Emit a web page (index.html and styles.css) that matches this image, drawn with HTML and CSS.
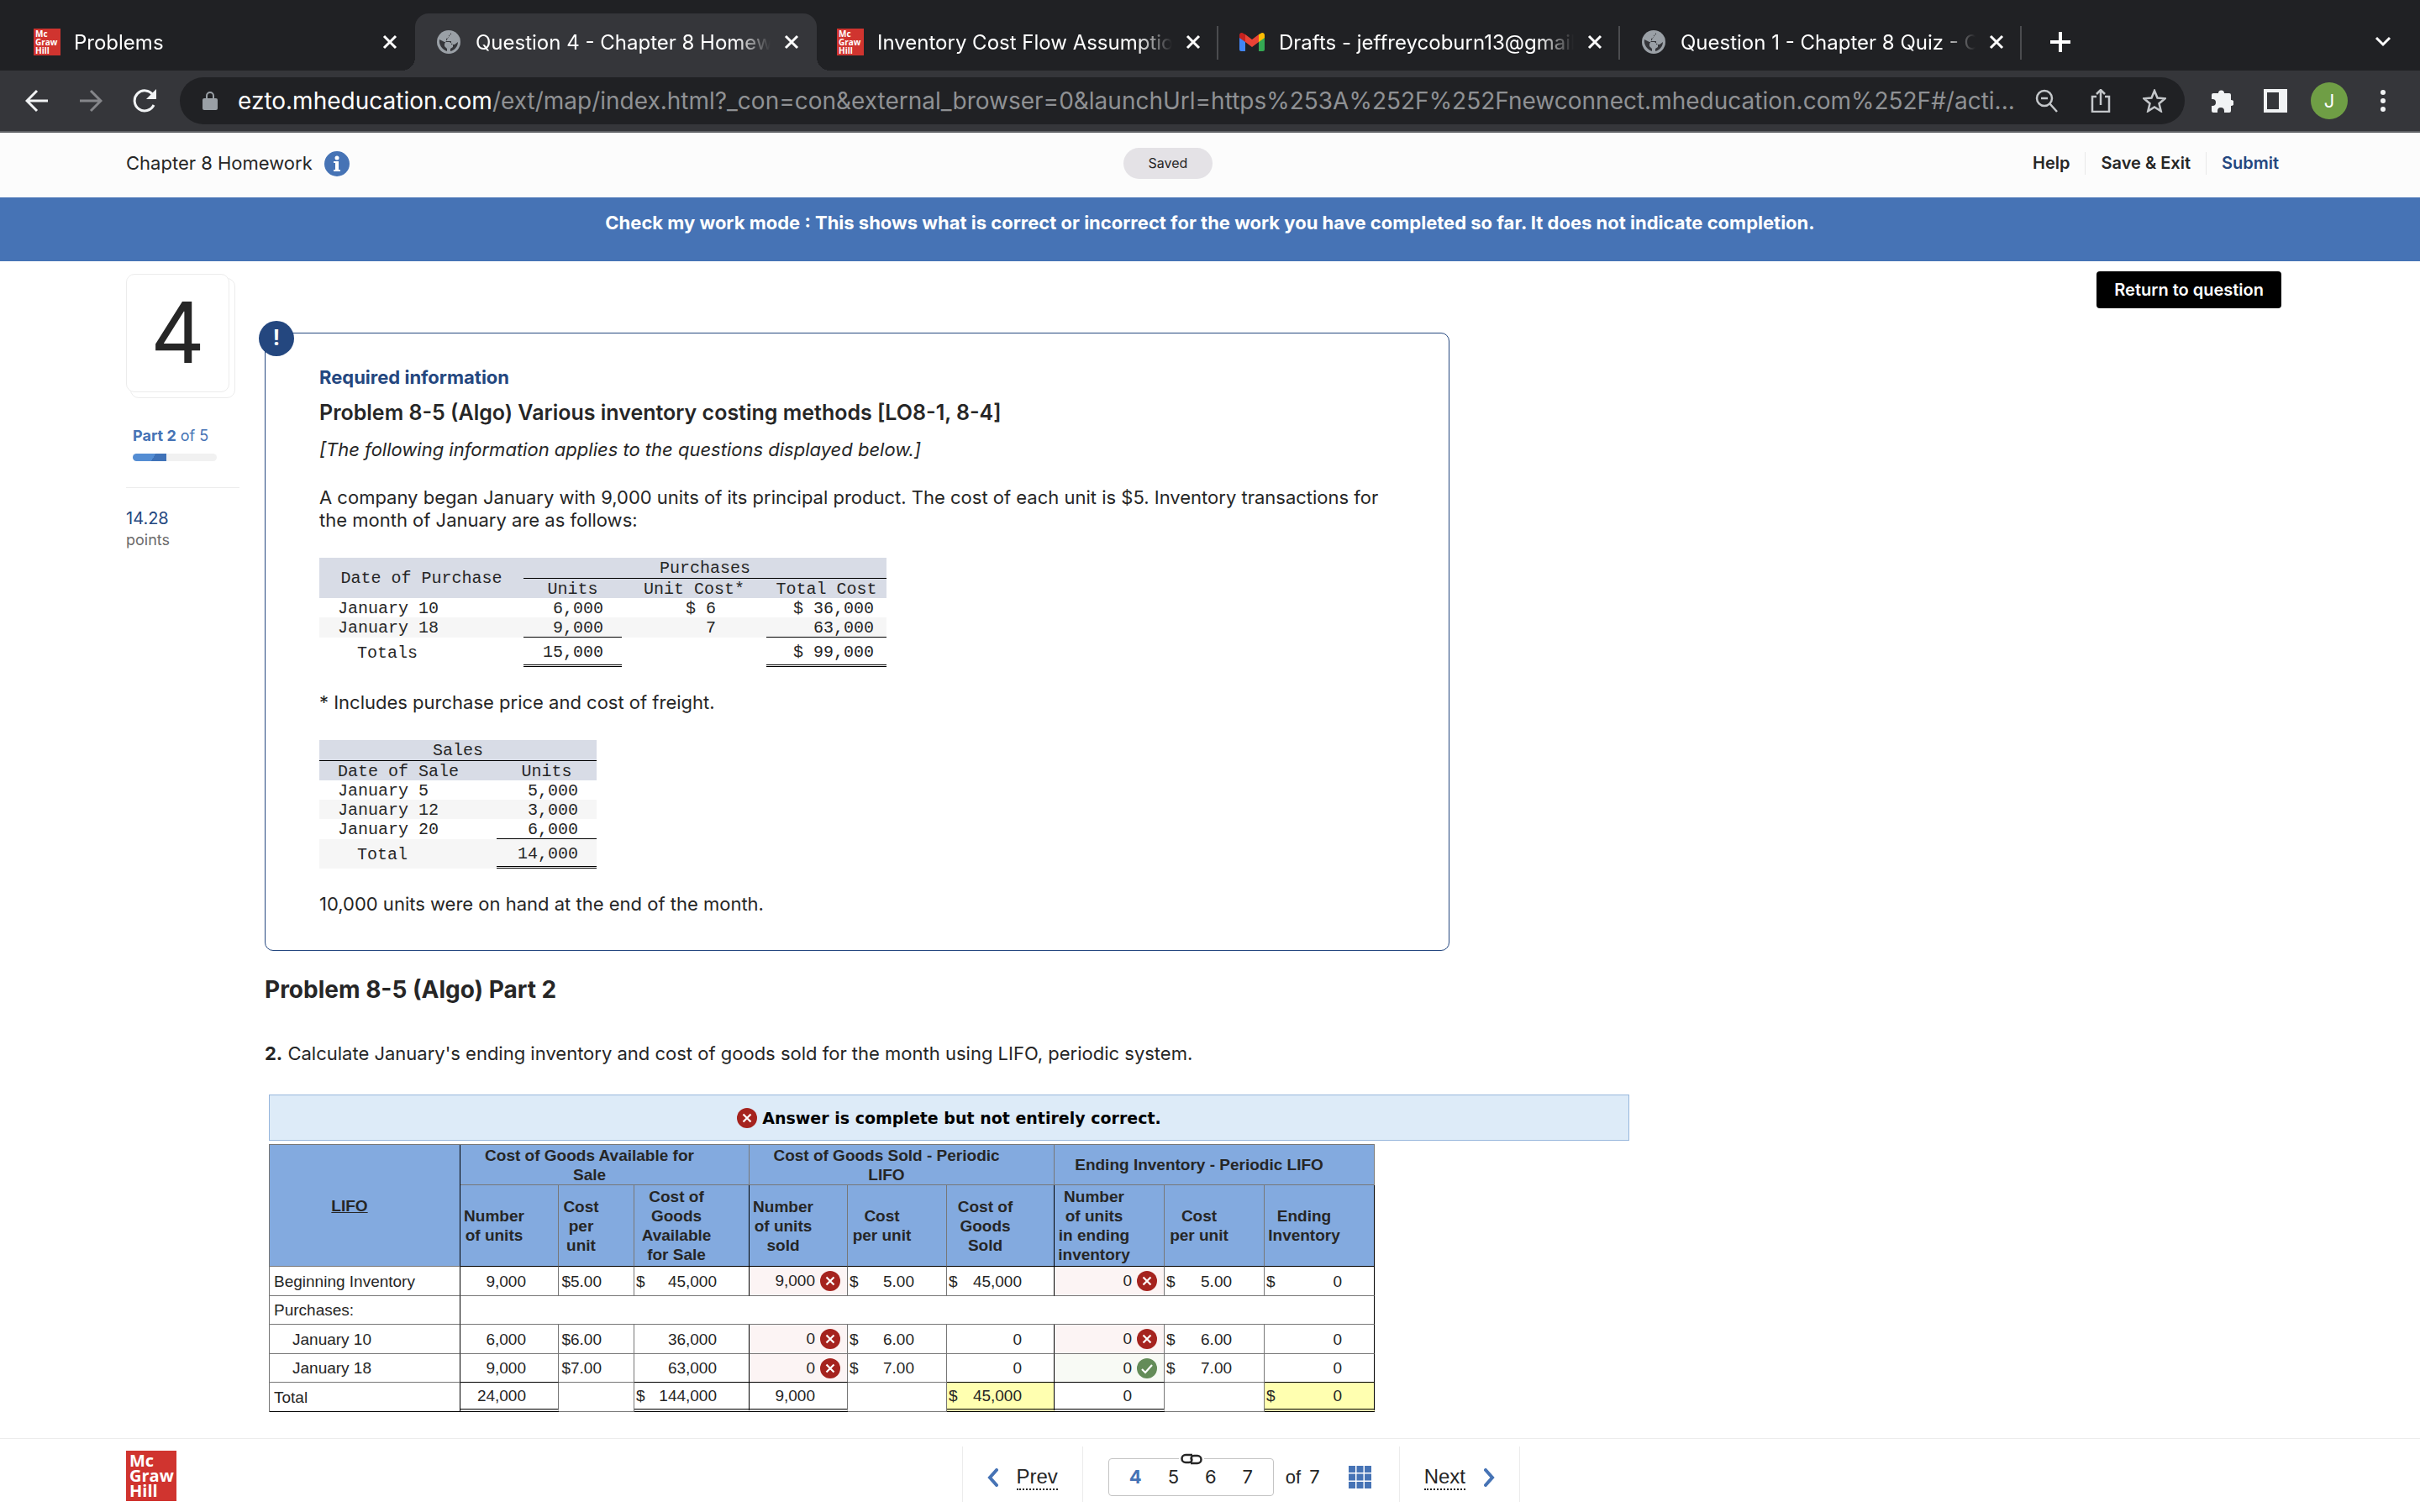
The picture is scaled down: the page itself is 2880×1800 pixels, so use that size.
FILE: index.html
```html
<!DOCTYPE html>
<html lang="en">
<head>
  <meta charset="UTF-8">
  <meta name="viewport" content="width=device-width, initial-scale=1.0">
  <title>Question 4 - Chapter 8 Homework</title>
  <link rel="stylesheet" href="styles.css">
</head>
<body>
  <svg class="sprite" aria-hidden="true">
    <symbol id="close" viewBox="0 0 18 18"><path d="M2 2l14 14M16 2L2 16" fill="none" stroke="currentColor" stroke-width="3"/></symbol>
    <symbol id="globe" viewBox="0 0 28 28">
      <circle cx="14" cy="14" r="14" fill="#9aa0a6"/>
      <path d="M17 3v2l-3 1v3l-3 1v3h6v4h4l4-3c0 5-4 10-9 11v-3l3-2v-3l-4-3H9l-6-3c-1 6 3 12 9 14v-3l-3-3v-3" fill="#35363a"/>
    </symbol>
    <symbol id="wrong" viewBox="0 0 24 24"><circle cx="12" cy="12" r="12" fill="#a5231e"/><path d="M7.500 7.500l9 9M16.500 7.500l-9 9" stroke="#fff" stroke-width="2.200"/></symbol>
    <symbol id="right" viewBox="0 0 24 24"><circle cx="12" cy="12" r="12" fill="#648c58"/><path d="M6 13l4 4 8-9" fill="none" stroke="#fff" stroke-width="2.200"/></symbol>
  </svg>

  <div class="tabs">
    <div class="tab">
      <span class="favicon">Mc<br>Graw<br>Hill</span>
      <span class="tab-title">Problems</span>
      <button class="icon-button" aria-label="Close tab"><svg width="18" height="18"><use href="#close"/></svg></button>
    </div>
    <div class="tab active">
      <span class="favicon-globe"><svg width="28" height="28"><use href="#globe"/></svg></span>
      <span class="tab-title">Question 4 - Chapter 8 Homew</span>
      <button class="icon-button" aria-label="Close tab"><svg width="18" height="18"><use href="#close"/></svg></button>
    </div>
    <div class="tab divided">
      <span class="favicon">Mc<br>Graw<br>Hill</span>
      <span class="tab-title">Inventory Cost Flow Assumptio</span>
      <button class="icon-button" aria-label="Close tab"><svg width="18" height="18"><use href="#close"/></svg></button>
    </div>
    <div class="tab divided">
      <svg width="32" height="24" viewBox="0 0 32 24">
        <path d="M1 3v18a2 2 0 0 0 2 2h5V9z" fill="#4285f4"/>
        <path d="M31 3v18a2 2 0 0 1-2 2h-5V9z" fill="#34a853"/>
        <path d="M8 3l8 6 8-6v9l-8 6-8-6z" fill="#ea4335"/>
        <path d="M1 4c0-3 3-4 5-2l2 1v9L1 7z" fill="#c5221f"/>
        <path d="M31 4c0-3-3-4-5-2l-2 1v9l7-5z" fill="#fbbc04"/>
      </svg>
      <span class="tab-title">Drafts - jeffreycoburn13@gmail</span>
      <button class="icon-button" aria-label="Close tab"><svg width="18" height="18"><use href="#close"/></svg></button>
    </div>
    <div class="tab divided">
      <span class="favicon-globe"><svg width="28" height="28"><use href="#globe"/></svg></span>
      <span class="tab-title">Question 1 - Chapter 8 Quiz - C</span>
      <button class="icon-button" aria-label="Close tab"><svg width="18" height="18"><use href="#close"/></svg></button>
    </div>
    <button class="icon-button new-tab" aria-label="New tab"><svg width="24" height="24" viewBox="0 0 24 24"><path d="M12 0v24M0 12h24" stroke="#fff" stroke-width="4"/></svg></button>
    <button class="icon-button tab-search" aria-label="Search tabs"><svg width="20" height="14" viewBox="0 0 20 14"><path d="M2 2l8 8 8-8" fill="none" stroke="#fff" stroke-width="3"/></svg></button>
  </div>

  <div class="toolbar">
    <button class="icon-button" aria-label="Back"><svg width="28" height="28" viewBox="0 0 28 28"><path d="M27 14H3M14 2L2 14l12 12" fill="none" stroke="#f1f3f4" stroke-width="3"/></svg></button>
    <button class="icon-button" aria-label="Forward"><svg width="28" height="28" viewBox="0 0 28 28"><path d="M1 14h24M14 2l12 12-12 12" fill="none" stroke="#85868a" stroke-width="3"/></svg></button>
    <button class="icon-button" aria-label="Reload"><svg width="28" height="28" viewBox="0 0 28 28"><path d="M24 7a12 12 0 1 0 1 12" fill="none" stroke="#f1f3f4" stroke-width="3"/><path d="M28 0v12H16z" fill="#f1f3f4"/></svg></button>
    <div class="omnibox">
      <svg width="18" height="22" viewBox="0 0 18 22"><rect y="8" width="18" height="14" rx="2" fill="#9aa0a6"/><path d="M5 9V5a4 4 0 0 1 8 0v4" fill="none" stroke="#9aa0a6" stroke-width="2"/></svg>
      <div class="url"><b>ezto.mheducation.com</b>/ext/map/index.html?_con=con&amp;external_browser=0&amp;launchUrl=https%253A%252F%252Fnewconnect.mheducation.com%252F#/acti...</div>
      <div class="omnibox-actions">
        <button class="icon-button" aria-label="Zoom"><svg width="28" height="28" viewBox="0 0 28 28"><circle cx="11" cy="11" r="9" fill="none" stroke="#c4c7ca" stroke-width="2.500"/><path d="M17 17l9 10M7 11h8" stroke="#c4c7ca" stroke-width="2.500"/></svg></button>
        <button class="icon-button" aria-label="Share"><svg width="28" height="28" viewBox="0 0 28 28"><path d="M9 9H4v18h20V9h-5M14 19V2M9 6l5-5 5 5" fill="none" stroke="#c4c7ca" stroke-width="2.500"/></svg></button>
        <button class="icon-button" aria-label="Bookmark"><svg width="28" height="28" viewBox="0 0 28 28"><path d="M14 2l3.500 8.500 9 .8-7 6 2.200 9L14 21.500l-7.700 4.800 2.200-9-7-6 9-.8z" fill="none" stroke="#c4c7ca" stroke-width="2.500"/></svg></button>
      </div>
    </div>
    <div class="toolbar-end">
      <button class="icon-button" aria-label="Extensions"><svg width="28" height="28" viewBox="0 0 28 28"><path d="M25 13V7a2 2 0 0 0-2-2h-6a3.500 3.500 0 0 0-7 0H4a2 2 0 0 0-2 2v5h1a4 4 0 0 1 0 8H2v6a2 2 0 0 0 2 2h5v-2a4 4 0 0 1 8 0v2h6a2 2 0 0 0 2-2v-6a3.500 3.500 0 0 0 0-7z" fill="#f1f3f4"/></svg></button>
      <button class="icon-button" aria-label="Side panel"><svg width="28" height="28" viewBox="0 0 28 28"><path d="M0 0h28v28H0zM4 4v20h14V4z" fill="#f1f3f4" fill-rule="evenodd"/></svg></button>
      <button class="avatar">J</button>
      <button class="icon-button" aria-label="Menu"><svg width="6" height="28" viewBox="0 0 6 28"><g fill="#f1f3f4"><circle cx="3" cy="4" r="3"/><circle cx="3" cy="14" r="3"/><circle cx="3" cy="24" r="3"/></g></svg></button>
    </div>
  </div>

  <header class="header">
    <div class="assignment">Chapter 8 Homework
      <svg width="30" height="30" viewBox="0 0 30 30"><circle cx="15" cy="15" r="15" fill="#4673b5"/><circle cx="15" cy="8" r="2.500" fill="#fff"/><path d="M11 12h6v10h2v2h-8v-2h2v-8h-2z" fill="#fff"/></svg>
    </div>
    <span class="saved">Saved</span>
    <nav class="header-links">
      <a href="#">Help</a>
      <a href="#">Save &amp; Exit</a>
      <a href="#" class="submit">Submit</a>
    </nav>
  </header>
  <div class="banner">Check my work mode : This shows what is correct or incorrect for the work you have completed so far. It does not indicate completion.</div>

  <main class="main">
    <aside class="sidebar">
      <div class="card">4</div>
      <div class="part"><b>Part 2</b> of 5</div>
      <div class="progress"><div class="progress-bar" style="width: 40%"></div></div>
      <div class="points"><span class="points-value">14.28</span><br>points</div>
    </aside>

    <div class="content">
      <section class="panel">
        <div class="badge">!</div>
        <h3 class="required">Required information</h3>
        <h2 class="panel-title">Problem 8-5 (Algo) Various inventory costing methods [LO8-1, 8-4]</h2>
        <p class="note">[The following information applies to the questions displayed below.]</p>
        <p class="intro">A company began January with 9,000 units of its principal product. The cost of each unit is $5. Inventory transactions for the month of January are as follows:</p>

        <table class="ledger purchases">
          <colgroup><col class="p-date"><col class="p-units"><col class="p-cost"><col class="p-total"></colgroup>
          <thead>
            <tr class="ruled"><th rowspan="2">Date of Purchase</th><th colspan="3" class="line">Purchases</th></tr>
            <tr><th>Units</th><th>Unit Cost*</th><th>Total Cost</th></tr>
          </thead>
          <tbody>
            <tr><td>January 10</td><td>6,000</td><td>$ 6</td><td>$ 36,000</td></tr>
            <tr class="ruled stripe"><td>January 18</td><td class="line">9,000</td><td>7</td><td class="line">63,000</td></tr>
            <tr class="sum"><td>Totals</td><td class="double">15,000</td><td></td><td class="double">$ 99,000</td></tr>
          </tbody>
        </table>

        <p class="after-table">* Includes purchase price and cost of freight.</p>

        <table class="ledger sales">
          <colgroup><col class="s-date"><col class="s-units"></colgroup>
          <thead>
            <tr class="ruled"><th colspan="2" class="line">Sales</th></tr>
            <tr><th class="left">Date of Sale</th><th>Units</th></tr>
          </thead>
          <tbody>
            <tr><td>January 5</td><td>5,000</td></tr>
            <tr class="stripe"><td>January 12</td><td>3,000</td></tr>
            <tr class="ruled"><td>January 20</td><td class="line">6,000</td></tr>
            <tr class="sum stripe"><td>Total</td><td class="double">14,000</td></tr>
          </tbody>
        </table>

        <p class="after-table">10,000 units were on hand at the end of the month.</p>
      </section>

      <h2 class="part-title">Problem 8-5 (Algo) Part 2</h2>
      <p class="question"><b>2.</b> Calculate January's ending inventory and cost of goods sold for the month using LIFO, periodic system.</p>

      <div class="answer">
        <div class="result"><svg width="24" height="24"><use href="#wrong"/></svg>Answer is complete but not entirely correct.</div>
        <table class="lifo">
          <colgroup><col class="c1"><col class="c2"><col class="c3"><col class="c4"><col class="c5"><col class="c6"><col class="c7"><col class="c8"><col class="c9"><col class="c10"></colgroup>
          <thead>
            <tr class="group-row">
              <th rowspan="2" class="dark-right"><u>LIFO</u></th>
              <th colspan="3">Cost of Goods Available for<br>Sale</th>
              <th colspan="3">Cost of Goods Sold - Periodic<br>LIFO</th>
              <th colspan="3">Ending Inventory - Periodic LIFO</th>
            </tr>
            <tr class="head-row">
              <th>Number of units</th><th>Cost per unit</th><th class="dark-right">Cost of Goods Available for Sale</th>
              <th>Number of units sold</th><th>Cost<br>per unit</th><th class="dark-right">Cost of Goods Sold</th>
              <th>Number<br>of units<br>in ending<br>inventory</th><th>Cost<br>per unit</th><th class="dark-right">Ending Inventory</th>
            </tr>
          </thead>
          <tbody>
            <tr>
              <td>Beginning Inventory</td>
              <td>9,000</td><td>$5.00</td><td class="dark-right"><span class="cur">$</span>45,000</td>
              <td class="bad">9,000<svg width="24" height="24"><use href="#wrong"/></svg></td><td><span class="cur">$</span>5.00</td><td class="dark-right"><span class="cur">$</span>45,000</td>
              <td class="bad">0<svg width="24" height="24"><use href="#wrong"/></svg></td><td><span class="cur">$</span>5.00</td><td class="dark-right"><span class="cur">$</span>0</td>
            </tr>
            <tr class="short">
              <td>Purchases:</td><td colspan="9" class="dark-right"></td>
            </tr>
            <tr>
              <td class="indent">January 10</td>
              <td>6,000</td><td>$6.00</td><td class="dark-right">36,000</td>
              <td class="bad">0<svg width="24" height="24"><use href="#wrong"/></svg></td><td><span class="cur">$</span>6.00</td><td class="dark-right">0</td>
              <td class="bad">0<svg width="24" height="24"><use href="#wrong"/></svg></td><td><span class="cur">$</span>6.00</td><td class="dark-right">0</td>
            </tr>
            <tr class="short">
              <td class="indent">January 18</td>
              <td class="dark-bottom">9,000</td><td>$7.00</td><td class="dark-right dark-bottom">63,000</td>
              <td class="bad dark-bottom">0<svg width="24" height="24"><use href="#wrong"/></svg></td><td><span class="cur">$</span>7.00</td><td class="dark-right dark-bottom">0</td>
              <td class="good dark-bottom">0<svg width="24" height="24"><use href="#right"/></svg></td><td><span class="cur">$</span>7.00</td><td class="dark-right dark-bottom">0</td>
            </tr>
            <tr>
              <td class="dark-bottom">Total</td>
              <td class="double">24,000</td><td></td><td class="dark-right double"><span class="cur">$</span>144,000</td>
              <td class="double">9,000</td><td></td><td class="dark-right double yellow"><span class="cur">$</span>45,000</td>
              <td class="double">0</td><td></td><td class="dark-right double yellow"><span class="cur">$</span>0</td>
            </tr>
          </tbody>
        </table>
      </div>
    </div>

    <button class="return">Return to question</button>
  </main>

  <footer class="footer">
    <div class="logo">Mc<br>Graw<br>Hill</div>
    <nav class="pager">
      <a href="#" class="step"><svg width="13" height="22" viewBox="0 0 13 22"><path d="M11 2L3 11l8 9" fill="none" stroke="#4673b5" stroke-width="4" stroke-linecap="round"/></svg><span>Prev</span></a>
      <div class="pages">
        <div class="page-box">
          <svg class="link" width="30" height="14" viewBox="0 0 30 14"><path d="M0 0h30v14H0z" fill="#fff"/><g fill="none" stroke="#262626" stroke-width="2.500"><path d="M16 2H8a4 4 0 0 0 0 9h4c3 0 4-2 3-5"/><path d="M14 12h8a4 4 0 0 0 0-9h-4c-3 0-4 2-3 5"/></g></svg>
          <a href="#" class="current">4</a><a href="#">5</a><a href="#">6</a><a href="#">7</a>
        </div>
        <span class="of">of</span><span>7</span>
        <button class="icon-button grid" aria-label="All questions"><svg width="27" height="27" viewBox="0 0 27 27"><path d="M0 0h8v8H0zM9.500 0h8v8h-8zM19 0h8v8h-8zM0 9.500h8v8H0zM9.500 9.500h8v8h-8zM19 9.500h8v8h-8zM0 19h8v8H0zM9.500 19h8v8h-8zM19 19h8v8h-8z" fill="#4673b5"/></svg></button>
      </div>
      <a href="#" class="step next"><span>Next</span><svg width="13" height="22" viewBox="0 0 13 22"><path d="M2 2l8 9-8 9" fill="none" stroke="#4673b5" stroke-width="4" stroke-linecap="round"/></svg></a>
    </nav>
  </footer>
</body>
</html>
```
FILE: styles.css
```css
* {
  box-sizing: border-box;
}
body {
  display: flex;
  flex-direction: column;
  min-height: 100vh;
  margin: 0;
  background-color: #fff;
  color: #262626;
  font-family: Inter, "Liberation Sans", sans-serif;
  font-size: 22px;
  line-height: 27px;
}
h2, h3, p {
  margin: 0;
}
a {
  color: inherit;
  text-decoration: none;
}
button {
  font-family: inherit;
  cursor: pointer;
}
svg {
  display: block;
  flex: none;
}
.sprite {
  position: absolute;
  width: 0;
  height: 0;
}
.icon-button {
  padding: 0;
  border: none;
  background: none;
  color: #fff;
}

/* browser tabs */
.tabs {
  display: flex;
  align-items: center;
  padding: 16px 34px 0 16px;
  background-color: #202124;
  color: #fff;
  font-size: 24px;
}
.tab {
  position: relative;
  display: flex;
  align-items: center;
  gap: 16px;
  width: 478px;
  height: 68px;
  padding: 0 21px 0 24px;
}
.tab.active {
  border-radius: 16px 16px 0 0;
  background-color: #35363a;
}
.tab.active::before,
.tab.active::after {
  content: "";
  position: absolute;
  bottom: 0;
  width: 16px;
  height: 16px;
}
.tab.active::before {
  left: -16px;
  background: radial-gradient(circle at 0 0, transparent 16px, #35363a 16px);
}
.tab.active::after {
  right: -16px;
  background: radial-gradient(circle at 100% 0, transparent 16px, #35363a 16px);
}
.tab.divided::after {
  content: "";
  position: absolute;
  right: 0;
  top: 15px;
  width: 2px;
  height: 40px;
  background-color: #4b4c4f;
}
.tab-title {
  flex: 1;
  overflow: hidden;
  white-space: nowrap;
  -webkit-mask-image: linear-gradient(to right, #000 88%, transparent 100%);
  mask-image: linear-gradient(to right, #000 88%, transparent 100%);
}
.favicon {
  width: 32px;
  height: 32px;
  padding: 1px 0 0 2px;
  background-color: #d0342f;
  font: bold 10px/10px "Open Sans", sans-serif;
}
.favicon-globe {
  padding: 0 2px;
}
.new-tab {
  margin-left: 34px;
}
.tab-search {
  margin-left: auto;
}

/* address bar */
.toolbar {
  display: flex;
  align-items: center;
  gap: 36px;
  padding: 8px 41px 8px 30px;
  border-bottom: 2px solid #5f6165;
  background-color: #35363a;
}
.omnibox {
  display: flex;
  flex: 1;
  align-items: center;
  gap: 24px;
  height: 56px;
  margin-left: -8px;
  padding: 0 22px 0 27px;
  border-radius: 28px;
  background-color: #202124;
}
.url {
  flex: 1;
  width: 0;
  overflow: hidden;
  color: #8f9194;
  font-size: 28px;
  line-height: 36px;
  white-space: nowrap;
}
.url b {
  color: #fff;
  font-weight: 400;
}
.omnibox-actions {
  display: flex;
  gap: 36px;
}
.toolbar-end {
  display: flex;
  align-items: center;
  gap: 36px;
  margin-left: -6px;
}
.avatar {
  width: 44px;
  height: 44px;
  margin: 0 -8px;
  padding: 0;
  border: none;
  border-radius: 50%;
  background-color: #6f9e45;
  color: #fff;
  font-size: 22px;
}
.toolbar-end .icon-button:last-child {
  margin-left: 11px;
}

/* assignment header */
.header {
  display: flex;
  align-items: center;
  height: 77px;
  padding: 0 165px 4px 150px;
  background-color: #fcfcfc;
}
.assignment {
  display: flex;
  align-items: center;
  gap: 14px;
  width: calc(50% - 96px);
}
.saved {
  padding: 5px 30px;
  border-radius: 19px;
  background-color: #e4e2e6;
  font-size: 16px;
}
.header-links {
  display: flex;
  margin-left: auto;
  font-size: 20px;
  font-weight: 600;
}
.header-links a {
  padding: 0 18px;
}
.header-links a + a {
  border-left: 1px solid #e8e8e8;
}
.header-links .submit {
  padding-right: 3px;
  color: #24477f;
}
.banner {
  padding: 17px 20px 32px;
  background-color: #4673b5;
  color: #fff;
  font-weight: 700;
  text-align: center;
}

/* question page */
.main {
  display: flex;
  align-items: flex-start;
  padding: 0 165px 0 150px;
}
.sidebar {
  width: 135px;
  margin: 15px 30px 0 0;
}
.card {
  position: relative;
  width: 123px;
  height: 141px;
  border: 1px solid #ececec;
  border-radius: 10px;
  background-color: #fff;
  font-size: 100px;
  line-height: 137px;
  text-align: center;
}
.card::after {
  content: "";
  position: absolute;
  z-index: -1;
  inset: 4px -8px -8px 4px;
  border: 1px solid #ececec;
  border-radius: 10px;
}
.part {
  margin: 40px 0 0 8px;
  color: #4673b5;
  font-size: 18px;
  line-height: 24px;
}
.progress {
  width: 100px;
  height: 9px;
  margin: 9px 0 0 8px;
  overflow: hidden;
  border-radius: 5px;
  background-color: #f1f1f1;
}
.progress-bar {
  height: 100%;
  background: linear-gradient(120deg, #548dd3 60%, #3f72b8 60%);
}
.points {
  margin-top: 31px;
  padding-top: 24px;
  border-top: 1px solid #ececec;
  color: #6b6b6b;
  font-size: 18px;
  line-height: 25px;
}
.points-value {
  color: #24477f;
  font-size: 20px;
}
.content {
  flex: 1;
  max-width: 1624px;
  margin-top: 85px;
}
.panel {
  position: relative;
  max-width: 1410px;
  padding: 38px 64px 41px;
  border: 1px solid #24477f;
  border-radius: 10px;
}
.badge {
  position: absolute;
  top: -15px;
  left: -8px;
  width: 42px;
  height: 42px;
  border-radius: 50%;
  background-color: #24477f;
  color: #fff;
  font-size: 25px;
  font-weight: 700;
  line-height: 40px;
  text-align: center;
}
.required {
  color: #24477f;
  font-size: 22px;
  line-height: 28px;
}
.panel-title {
  margin-top: 14px;
  font-size: 25px;
  font-weight: 600;
  line-height: 28px;
}
.note {
  margin-top: 17px;
  font-style: italic;
}
.intro {
  margin: 30px 0 31px;
}
.after-table {
  margin-top: 29px;
}
.after-table + .ledger {
  margin-top: 31px;
}
.ledger {
  border-spacing: 0;
  table-layout: fixed;
  font: 20px/20px "Liberation Mono", monospace;
}
.purchases {
  width: 675px;
}
.sales {
  width: 330px;
}
.p-date { width: 243px; }
.p-units { width: 117px; }
.p-cost { width: 172px; }
.p-total { width: 143px; }
.s-date { width: 211px; }
.s-units { width: 119px; }
.ledger tr {
  height: 23px;
}
.ledger thead .ruled {
  height: 25px;
}
.ledger tbody .ruled {
  height: 24px;
}
.ledger .sum {
  height: 35px;
}
.ledger th {
  padding: 2px 0 0;
  background-color: #d8dce6;
  font-weight: 400;
}
.ledger td {
  padding: 2px 22px 0 0;
  text-align: right;
}
.purchases td:nth-child(3) {
  padding-right: 60px;
}
.purchases td:nth-child(4) {
  padding-right: 15px;
}
.ledger th.left,
.ledger td:first-child {
  padding-left: 22px;
  text-align: left;
}
.ledger .sum td {
  padding-top: 4px;
}
.ledger .sum td:first-child {
  padding-top: 2px;
  padding-left: 45px;
}
.ledger .stripe {
  background-color: #f6f6f6;
}
.ledger .line {
  border-bottom: 1px solid #000;
}
.ledger .double {
  border-bottom: 3px double #000;
}
.part-title {
  margin-top: 29px;
  font-size: 28px;
  line-height: 34px;
}
.question {
  margin-top: 46px;
}

/* graded answer */
.answer {
  margin: 35px 0 0 5px;
}
.result {
  display: flex;
  align-items: center;
  justify-content: center;
  gap: 6px;
  height: 55px;
  border: 1px solid #98b7dc;
  background-color: #ddebf8;
  color: #000;
  font: bold 19px "DejaVu Sans", sans-serif;
}
.lifo {
  width: 1316px;
  margin-top: 4px;
  border: 1px solid #777;
  border-width: 1px 0 0 1px;
  border-spacing: 0;
  table-layout: fixed;
  font: 19px/23px "Liberation Sans", Arial, sans-serif;
}
.c1 { width: 227px; }
.c2 { width: 117px; }
.c3 { width: 90px; }
.c4 { width: 137px; }
.c5 { width: 117px; }
.c6 { width: 118px; }
.c7 { width: 128px; }
.c8 { width: 131px; }
.c9 { width: 119px; }
.c10 { width: 131px; }
.lifo tr {
  height: 35px;
}
.lifo .short {
  height: 34px;
}
.lifo .group-row {
  height: 48px;
}
.lifo .head-row {
  height: 97px;
}
.lifo th,
.lifo td {
  padding: 0 38px 0 2px;
  border: 0 solid #777;
  border-width: 0 1px 1px 0;
  text-align: right;
}
.lifo th {
  background-color: #83aadf;
  text-align: center;
}
.lifo td:first-child {
  padding-left: 5px;
  border-right-color: #000;
  text-align: left;
}
.lifo td.indent {
  padding-left: 27px;
}
.lifo .head-row th,
.lifo .dark-bottom {
  border-bottom-color: #000;
}
.lifo .dark-right {
  border-right-color: #000;
}
.lifo .double {
  border-bottom: 4px double #000;
}
.lifo .bad,
.lifo .good {
  padding-right: 8px;
  background-color: #fcf4f4;
}
.lifo .good {
  background-color: #f8faf5;
}
.lifo td svg {
  display: inline-block;
  margin-left: 6px;
  vertical-align: -6px;
}
.lifo .yellow {
  background-color: #ffffb0;
}
.cur {
  float: left;
}
.return {
  height: 44px;
  margin: 12px 0 0 auto;
  padding: 0 21px;
  border: none;
  border-radius: 4px;
  background-color: #000;
  color: #fff;
  font-size: 20px;
  font-weight: 600;
}

/* footer */
.footer {
  display: flex;
  align-items: center;
  height: 88px;
  margin-top: auto;
  padding: 0 165px 0 150px;
  border-top: 1px solid #ececec;
}
.logo {
  width: 60px;
  height: 60px;
  padding: 3px 0 0 4px;
  background-color: #d0342f;
  color: #fff;
  font: bold 20px/18px "Open Sans", sans-serif;
}
.pager {
  display: flex;
  height: 66px;
  margin: 0 0 4px calc(50% - 348px);
  border: 1px solid #ececec;
  border-width: 0 1px;
}
.step {
  display: flex;
  align-items: center;
  gap: 22px;
  padding: 8px 29px 0;
  font: 24px "Liberation Sans", Arial, sans-serif;
}
.step span {
  border-bottom: 2px dotted #262626;
}
.pages {
  display: flex;
  align-items: center;
  padding: 8px 33px 0 30px;
  border: 1px solid #ececec;
  border-width: 0 1px;
}
.page-box {
  position: relative;
  display: flex;
  justify-content: space-between;
  width: 197px;
  height: 45px;
  margin-right: 14px;
  padding: 8px 24px;
  border: 1px solid #c4c4c4;
  border-radius: 4px;
}
.current {
  color: #4673b5;
  font-weight: 700;
}
.link {
  position: absolute;
  top: -7px;
  left: 83px;
}
.of {
  margin-right: 10px;
  font-family: "Liberation Sans", Arial, sans-serif;
}
.grid {
  margin-left: 34px;
}
```
